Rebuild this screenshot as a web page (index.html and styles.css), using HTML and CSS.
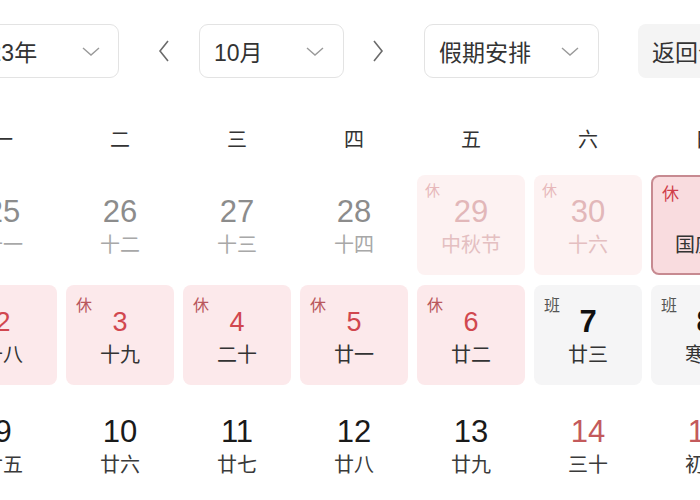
FILE: index.html
```html
<!DOCTYPE html>
<html lang="zh-CN">
<head>
<meta charset="utf-8">
<link rel="stylesheet" href="styles.css">
</head>
<body>
<div class="page">
  <div class="toolbar">
    <div class="select year"><span>2023年</span><svg class="chev" viewBox="0 0 18 9"><path d="M1 1l8 7 8-7"/></svg></div>
    <div class="nav prev"><svg viewBox="0 0 12 22"><path d="M10 1L2 11l8 10"/></svg></div>
    <div class="select month"><span>10月</span><svg class="chev" viewBox="0 0 18 9"><path d="M1 1l8 7 8-7"/></svg></div>
    <div class="nav next"><svg viewBox="0 0 12 22"><path d="M2 1l8 10-8 10"/></svg></div>
    <div class="select holiday"><span>假期安排</span><svg class="chev" viewBox="0 0 18 9"><path d="M1 1l8 7 8-7"/></svg></div>
    <div class="back">返回今天</div>
  </div>

  <div class="weekdays">
    <div>一</div><div>二</div><div>三</div><div>四</div><div>五</div><div>六</div><div>日</div>
  </div>

  <div class="days">
    <div class="day other"><span class="num">25</span><span class="lunar">十一</span></div>
    <div class="day other"><span class="num">26</span><span class="lunar">十二</span></div>
    <div class="day other"><span class="num">27</span><span class="lunar">十三</span></div>
    <div class="day other"><span class="num">28</span><span class="lunar">十四</span></div>
    <div class="day other rest-faded"><span class="tag">休</span><span class="num">29</span><span class="lunar">中秋节</span></div>
    <div class="day other rest-faded"><span class="tag">休</span><span class="num">30</span><span class="lunar">十六</span></div>
    <div class="day today"><span class="tag">休</span><span class="num">1</span><span class="lunar">国庆节</span></div>

    <div class="day rest"><span class="tag">休</span><span class="num">2</span><span class="lunar">十八</span></div>
    <div class="day rest"><span class="tag">休</span><span class="num">3</span><span class="lunar">十九</span></div>
    <div class="day rest"><span class="tag">休</span><span class="num">4</span><span class="lunar">二十</span></div>
    <div class="day rest"><span class="tag">休</span><span class="num">5</span><span class="lunar">廿一</span></div>
    <div class="day rest"><span class="tag">休</span><span class="num">6</span><span class="lunar">廿二</span></div>
    <div class="day work"><span class="tag">班</span><span class="num">7</span><span class="lunar">廿三</span></div>
    <div class="day work"><span class="tag">班</span><span class="num">8</span><span class="lunar">寒露</span></div>

    <div class="day"><span class="num">9</span><span class="lunar">廿五</span></div>
    <div class="day"><span class="num">10</span><span class="lunar">廿六</span></div>
    <div class="day"><span class="num">11</span><span class="lunar">廿七</span></div>
    <div class="day"><span class="num">12</span><span class="lunar">廿八</span></div>
    <div class="day"><span class="num">13</span><span class="lunar">廿九</span></div>
    <div class="day weekend"><span class="num">14</span><span class="lunar">三十</span></div>
    <div class="day weekend"><span class="num">15</span><span class="lunar">初一</span></div>
  </div>
</div>
</body>
</html>
```

FILE: styles.css
```css
html, body {
  margin: 0;
  padding: 0;
  background: #ffffff;
}

body {
  font-family: "Liberation Sans", "Noto Sans CJK SC", sans-serif;
  color: #333333;
}

.page {
  width: 700px;
  height: 500px;
  overflow: hidden;
}

/* ---------- toolbar ---------- */
.toolbar {
  display: flex;
  align-items: center;
  margin-top: 24px;
  margin-left: -53px;
  height: 54px;
}

.select {
  box-sizing: border-box;
  height: 54px;
  border: 1px solid #e3e3e3;
  border-radius: 9px;
  display: flex;
  align-items: center;
  justify-content: space-between;
  font-size: 23px;
  color: #333333;
  flex: none;
}

.select.year {
  width: 172px;
  padding: 0 18px 0 15px;
}

.select.month {
  width: 145px;
  padding: 0 19px 0 14px;
}

.select.holiday {
  width: 175px;
  padding: 0 19px 0 14px;
  margin-left: 40px;
}

.chev {
  width: 18px;
  height: 9px;
  fill: none;
  stroke: #9a9a9a;
  stroke-width: 1.4;
}

.nav {
  flex: none;
  display: flex;
  align-items: center;
}

.nav svg {
  width: 12px;
  height: 22px;
  fill: none;
  stroke: #6b6b6b;
  stroke-width: 1.6;
}

.nav.prev {
  margin-left: 39px;
  margin-right: 29px;
}

.nav.next {
  margin-left: 28px;
}

.back {
  flex: none;
  box-sizing: border-box;
  height: 54px;
  margin-left: 39px;
  padding: 0 14px;
  background: #f4f4f4;
  border-radius: 8px;
  display: flex;
  align-items: center;
  font-size: 23px;
  color: #333333;
  white-space: nowrap;
}

/* ---------- weekdays ---------- */
.weekdays {
  display: grid;
  grid-template-columns: repeat(7, 108px);
  column-gap: 9px;
  margin-left: -51px;
  margin-top: 40px;
  height: 40px;
  align-items: center;
  font-size: 20px;
  color: #333333;
}

.weekdays div {
  text-align: center;
}

/* ---------- days ---------- */
.days {
  display: grid;
  grid-template-columns: repeat(7, 108px);
  grid-auto-rows: 100px;
  column-gap: 9px;
  row-gap: 10px;
  margin-left: -51px;
  margin-top: 17px;
}

.day {
  position: relative;
  box-sizing: border-box;
  border-radius: 8px;
  display: flex;
  flex-direction: column;
  align-items: center;
  padding-top: 20px;
}

.num {
  font-size: 31px;
  line-height: 34px;
  color: #1a1a1a;
}

.lunar {
  margin-top: 2px;
  font-size: 20px;
  line-height: 28px;
  color: #3a3a3a;
}

.tag {
  position: absolute;
  left: 10px;
  top: 10px;
  font-size: 16px;
  line-height: 20px;
}

/* previous month */
.day.other .num {
  color: #8c8c8c;
}

.day.other .lunar {
  color: #a8a8a8;
}

.day.rest-faded {
  background: #fdf2f2;
}

.day.rest-faded .num {
  color: #e2b7b9;
}

.day.rest-faded .lunar {
  color: #e4bfc1;
}

.day.rest-faded .tag {
  left: 8px;
  top: 6px;
  font-size: 15px;
  color: #e7b8ba;
}

/* today / national day */
.day.today {
  background: #f9dcdf;
  border: 2px solid #c78a91;
  padding-top: 18px;
}

.day.today .tag {
  color: #d03f4b;
  left: 9px;
  top: 8px;
  font-size: 17px;
}

.day.today .num {
  color: #d03f4b;
  padding-left: 12px;
}

.day.today .lunar {
  color: #333333;
}

/* rest days */
.day.rest {
  background: #fce9eb;
}

.day.rest .tag {
  color: #b9585d;
  top: 11px;
}

.day.rest .num {
  font-size: 27px;
  color: #d1474f;
}

.day.rest .lunar {
  color: #333333;
}

/* working days */
.day.work {
  background: #f5f5f6;
}

.day.work .tag {
  color: #555555;
  top: 11px;
}

.day.work .num {
  font-size: 31px;
  font-weight: bold;
  color: #111111;
}

.day.work .lunar {
  color: #333333;
}

.day.weekend .num {
  color: #c35a5c;
}
```
